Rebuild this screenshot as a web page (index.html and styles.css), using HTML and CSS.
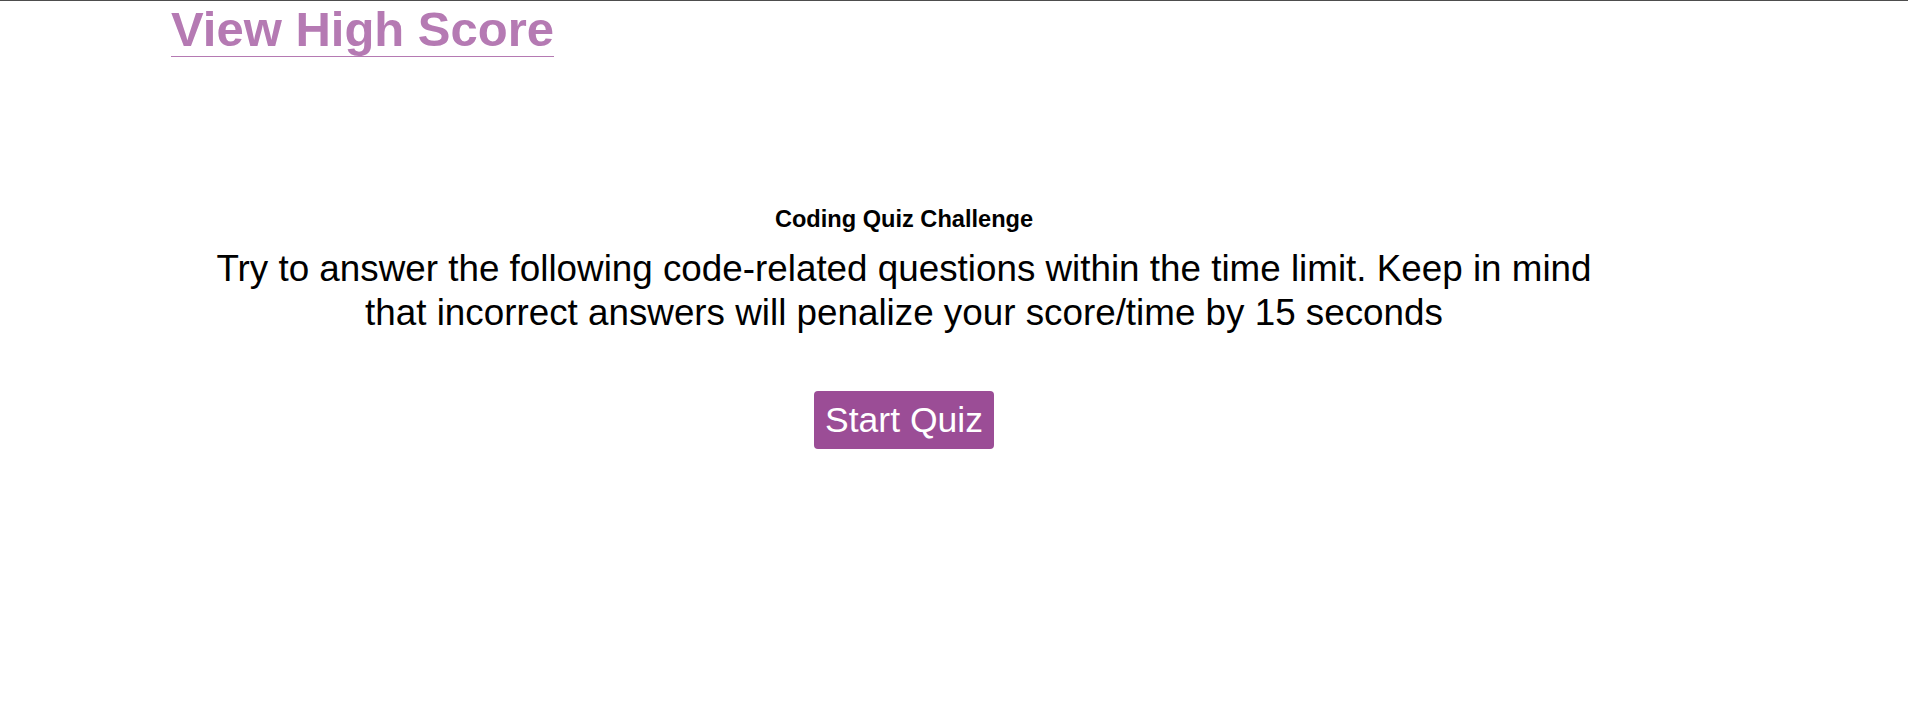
FILE: index.html
```html
<!DOCTYPE html>
<html lang="en">
<head>
<meta charset="utf-8">
<title>Coding Quiz Challenge</title>
<link rel="stylesheet" href="styles.css">
</head>
<body>
  <header class="top-bar">
    <a class="high-score-link" href="#">View High Score</a>
  </header>
  <main class="quiz-intro">
    <h2 class="quiz-title">Coding Quiz Challenge</h2>
    <p class="quiz-text">Try to answer the following code-related questions within the time limit. Keep in mind that incorrect answers will penalize your score/time by 15 seconds</p>
    <button class="start-btn" type="button">Start Quiz</button>
  </main>
</body>
</html>
```
FILE: styles.css
```css
html, body {
  margin: 0;
  padding: 0;
  background: #ffffff;
}

body {
  font-family: "Liberation Sans", Arial, Helvetica, sans-serif;
  color: #000000;
  border-top: 1px solid #4d4d4d;
}

.top-bar {
  padding-left: 171px;
  font-size: 49px;
  line-height: normal;
}

.high-score-link {
  font-weight: bold;
  color: #b57ab3;
  text-decoration: none;
  border-bottom: 1px solid #b57ab3;
}

.quiz-intro {
  padding: 149px 100px 0 0;
  text-align: center;
}

.quiz-title {
  margin: 0 0 14px;
  font-size: 23.6px;
  font-weight: bold;
  line-height: normal;
}

.quiz-text {
  width: 1410px;
  margin: 0 auto 57px;
  font-size: 36.8px;
  line-height: 43.5px;
}

.start-btn {
  font-family: "Liberation Sans", Arial, Helvetica, sans-serif;
  font-size: 35.5px;
  line-height: normal;
  color: #ffffff;
  background: #9b4d96;
  border: 0;
  border-radius: 4px;
  padding: 8.5px 11px;
  cursor: pointer;
}
```
